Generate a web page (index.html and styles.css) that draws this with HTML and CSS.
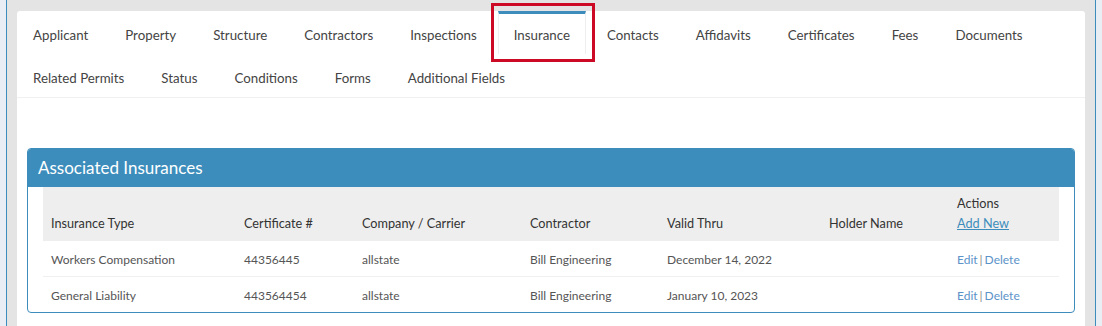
FILE: index.html
```html
<!DOCTYPE html>
<html>
<head>
  <meta charset="utf-8">
  <title>Permit - Insurance</title>
  <link rel="stylesheet" href="styles.css">
</head>
<body>
  <div class="wrapper">
    <div class="card">
      <ul class="tabs">
        <li><a>Applicant</a></li>
        <li><a>Property</a></li>
        <li><a>Structure</a></li>
        <li><a>Contractors</a></li>
        <li><a>Inspections</a></li>
        <li class="active"><a>Insurance</a><span class="highlight"></span></li>
        <li><a>Contacts</a></li>
        <li><a>Affidavits</a></li>
        <li><a>Certificates</a></li>
        <li><a>Fees</a></li>
        <li><a>Documents</a></li>
      </ul>
      <ul class="tabs last">
        <li><a>Related Permits</a></li>
        <li><a>Status</a></li>
        <li><a>Conditions</a></li>
        <li><a>Forms</a></li>
        <li><a>Additional Fields</a></li>
      </ul>
      <div class="tab-content">
        <div class="panel">
          <div class="panel-heading">Associated Insurances</div>
          <div class="panel-body">
            <table class="grid">
              <thead>
                <tr>
                  <th class="c1">Insurance Type</th>
                  <th class="c2">Certificate #</th>
                  <th class="c3">Company / Carrier</th>
                  <th class="c4">Contractor</th>
                  <th class="c5">Valid Thru</th>
                  <th class="c6">Holder Name</th>
                  <th class="c7">Actions<br><a class="add">Add New</a></th>
                </tr>
              </thead>
              <tbody>
                <tr>
                  <td>Workers Compensation</td>
                  <td>44356445</td>
                  <td>allstate</td>
                  <td>Bill Engineering</td>
                  <td>December 14, 2022</td>
                  <td></td>
                  <td><a>Edit</a><span class="sep">|</span><a>Delete</a></td>
                </tr>
                <tr>
                  <td>General Liability</td>
                  <td>443564454</td>
                  <td>allstate</td>
                  <td>Bill Engineering</td>
                  <td>January 10, 2023</td>
                  <td></td>
                  <td><a>Edit</a><span class="sep">|</span><a>Delete</a></td>
                </tr>
              </tbody>
            </table>
          </div>
        </div>
      </div>
    </div>
  </div>
</body>
</html>
```

FILE: styles.css
```css
html,
body {
  margin: 0;
  padding: 0;
  height: 100%;
  overflow: hidden;
}
body {
  background-color: #e9eef4;
  font-family: Lato, "Source Sans Pro", Arial, sans-serif;
  color: #444;
}
.wrapper {
  margin-left: 6px;
  width: 1068px;
  height: 100%;
  padding: 11px 10px 0;
  background-color: #e4e4e4;
  border-left: 1px solid #3c8dbc;
  border-right: 1px solid #3c8dbc;
}
.card {
  background-color: #fff;
  border-radius: 3px 3px 0 0;
  height: 100%;
}

.tabs {
  list-style: none;
  margin: 0;
  padding: 0;
  display: flex;
}
.tabs.last {
  border-bottom: 1px solid #f0f0f0;
}
.tabs li {
  position: relative;
  margin-right: 5px;
  border-top: 3px solid transparent;
  border-left: 1px solid transparent;
  border-right: 1px solid transparent;
}
.tabs a {
  display: block;
  padding: 11px 15px 9px;
  line-height: 20px;
  font-size: 13.3px;
  color: #444;
}
.tabs li.active {
  border-top-color: #3c8dbc;
  border-left-color: #eee;
  border-right-color: #eee;
}
.highlight {
  position: absolute;
  top: -11px;
  left: -8px;
  right: -10px;
  bottom: -8px;
  border: 3px solid #cc0a25;
}

.tab-content {
  padding: 50px 10px 0;
}
.panel {
  border: 1px solid #3c8dbc;
  border-radius: 4px;
  overflow: hidden;
}
.panel-heading {
  background-color: #3c8dbc;
  color: #fff;
  font-size: 17px;
  line-height: 38px;
  padding: 0 10px;
}
.panel-body {
  padding: 0 15px;
}
.grid {
  width: 100%;
  border-collapse: collapse;
  table-layout: fixed;
}
.grid th {
  background-color: #eee;
  text-align: left;
  vertical-align: bottom;
  font-weight: normal;
  font-size: 12.7px;
  line-height: 20px;
  color: #333;
  padding: 6px 8px 8px;
}
.grid td {
  font-size: 12px;
  line-height: 16px;
  color: #555;
  padding: 11px 8px 8px;
  border-top: 1px solid #f0f0f0;
}
.grid tbody tr:first-child td {
  border-top: 0;
}
.c1 { width: 177px; }
.c2 { width: 102px; }
.c3 { width: 152px; }
.c4 { width: 121px; }
.c5 { width: 146px; }
.c6 { width: 112px; }
.grid a {
  color: #5b93c9;
}
.grid a.add {
  color: #3c8dbc;
  text-decoration: underline;
}
.sep {
  color: #888;
  margin: 0 2px;
}
```
